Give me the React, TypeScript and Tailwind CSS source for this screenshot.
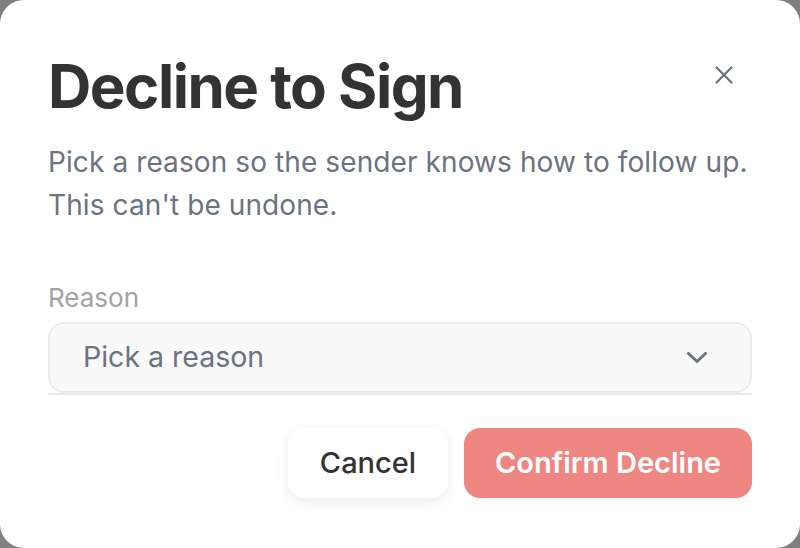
import { useState } from "react";

const reasons = ["Incorrect details", "Not the right signer", "Need more time", "Other"];

export default function App() {
    const [reason, setReason] = useState("");

    return (
        <div className="h-[548px] w-[800px] bg-[#808080] font-['Inter',sans-serif]">
            <div className="flex h-full flex-col rounded-3xl bg-white px-12 pt-[50px] pb-[50px]">
                <div className="flex items-start justify-between">
                    <h1 className="text-[60px] font-bold leading-[1.2] tracking-[-1.5px] text-[#333333]">Decline to Sign</h1>
                    <button className="mt-[5px] mr-2 flex h-10 w-10 items-center justify-center text-[#6b7280]" aria-label="Close">
                        <svg width="18" height="18" viewBox="0 0 18 18" fill="none" stroke="currentColor" strokeWidth="2.2" strokeLinecap="round">
                            <path d="M1.5 1.5l15 15M16.5 1.5l-15 15" />
                        </svg>
                    </button>
                </div>

                <p className="mt-[19px] text-[28px] leading-[43px] tracking-[0.1px] text-[#6b7280]">
                    Pick a reason so the sender knows how to follow up.
                    <br />
                    This can't be undone.
                </p>

                <label className="mt-[52px] text-[26px] leading-[37px] text-[#a3a3a3]">Reason</label>
                <div className="mt-[6px] border-b-2 border-[#ebebeb]">
                    <div className="relative">
                        <select
                            value={reason}
                            onChange={(e) => setReason(e.target.value)}
                            className="h-[71px] w-full appearance-none rounded-2xl border-2 border-[#ebebeb] bg-[#f9f9f9] pl-[33px] text-[28.5px] text-[#6b7280] outline-none"
                        >
                            <option value="">Pick a reason</option>
                            {reasons.map((r) => (
                                <option key={r} value={r}>{r}</option>
                            ))}
                        </select>
                        <svg className="pointer-events-none absolute right-[45px] top-[30px] text-[#6b7280]" width="20" height="11" viewBox="0 0 20 11" fill="none" stroke="currentColor" strokeWidth="3" strokeLinecap="round" strokeLinejoin="round">
                            <path d="M1.5 1.5l8.5 8 8.5-8" />
                        </svg>
                    </div>
                </div>

                <div className="mt-auto flex justify-end gap-4">
                    <button className="h-[70px] w-[160px] rounded-2xl bg-white text-[29px] font-medium text-[#333333] shadow-[0_4px_14px_rgba(0,0,0,0.08)]">
                        Cancel
                    </button>
                    <button className="h-[70px] w-[288px] rounded-2xl bg-[#ef8682] text-[29px] font-semibold text-white">
                        Confirm Decline
                    </button>
                </div>
            </div>
        </div>
    );
}
